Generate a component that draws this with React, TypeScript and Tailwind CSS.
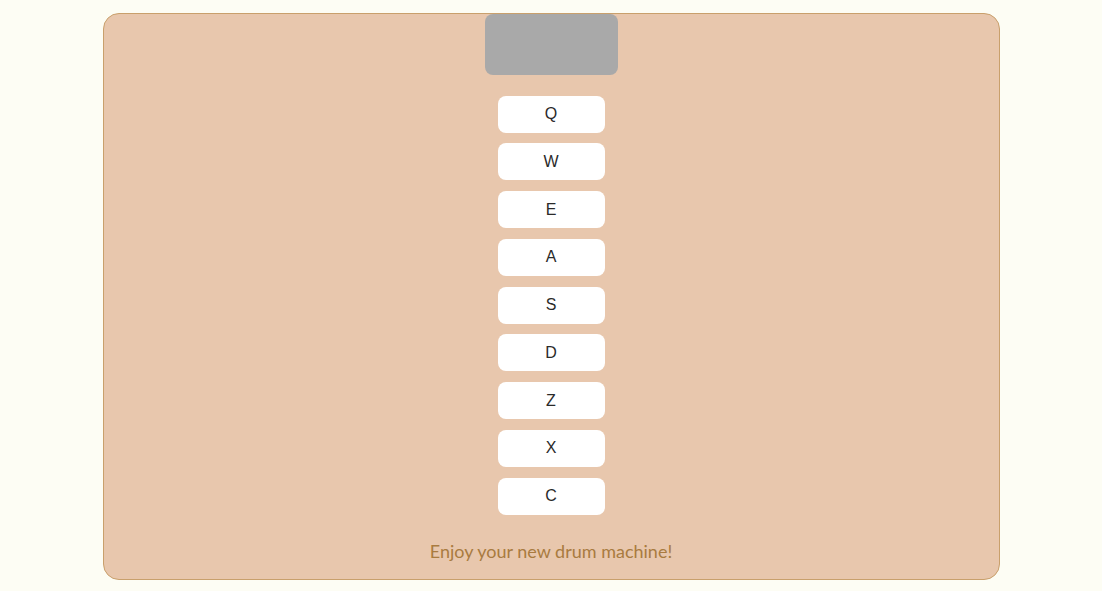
import React from 'react';

const pads = ['Q', 'W', 'E', 'A', 'S', 'D', 'Z', 'X', 'C'];

export default function App(): JSX.Element {
  return (
    <div className="min-h-screen w-full bg-[#fdfdf4] pt-[13px] pb-[11px]">
      {/* Drum machine */}
      <div className="mx-auto w-[897px] h-[567px] rounded-[16px] border border-[#c9a06c] bg-[#e8c7ad] flex flex-col items-center">
        <div className="w-[133px] h-[61px] rounded-[8px] bg-[#a9a9a9]" />
        <div className="mt-[20.5px] flex flex-col gap-[10.75px]">
          {pads.map((k) => (
            <button
              key={k}
              className="w-[107px] h-[37px] rounded-[8px] bg-white text-[16px] text-[#2a2a2a] font-['Liberation_Sans',Arial,sans-serif]"
            >
              {k}
            </button>
          ))}
        </div>
        <p className="mt-[22.5px] text-[18px] leading-[28px] text-[#a97b40] font-['Lato','Noto_Sans',sans-serif]">
          Enjoy your new drum machine!
        </p>
      </div>
    </div>
  );
}
